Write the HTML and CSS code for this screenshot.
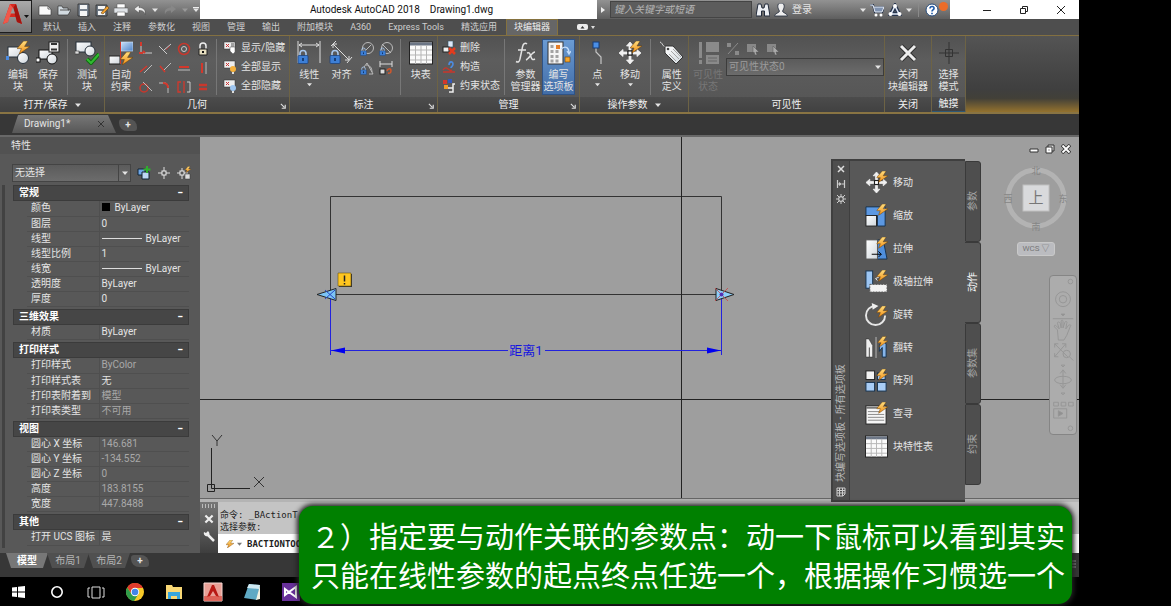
FILE: index.html
```html
<!DOCTYPE html>
<html lang="zh-CN">
<head>
<meta charset="utf-8">
<title>Autodesk AutoCAD 2018 - Drawing1.dwg</title>
<link rel="stylesheet" href="styles.css">
</head>
<body>
<svg class="sprite" aria-hidden="true">
  <defs>
    <linearGradient id="gl" x1="0" y1="0" x2="1" y2="1"><stop offset="0" stop-color="#ffffff"/><stop offset="1" stop-color="#cfd6dc"/></linearGradient>
    <linearGradient id="gb" x1="0" y1="0" x2="1" y2="1"><stop offset="0" stop-color="#c9e0f8"/><stop offset="1" stop-color="#4d83c9"/></linearGradient>
    <linearGradient id="gy" x1="0" y1="0" x2="0" y2="1"><stop offset="0" stop-color="#ffe082"/><stop offset="1" stop-color="#f08a10"/></linearGradient>
  </defs>
  <symbol id="bolt" viewBox="0 0 12 12"><path d="M6 0 0 7l4 0-2 5 10-7-5 0 3-5z" fill="url(#gy)" stroke="#6b3d05" stroke-width=".5"/></symbol>
  <symbol id="lock" viewBox="0 0 12 14"><path d="M3 7V4a3 3 0 0 1 6 0v3" fill="none" stroke="#a9c8ee" stroke-width="1.600"/><rect x="1" y="6" width="10" height="8" rx="1" fill="#3d7fd6" stroke="#173d78" stroke-width=".7"/><path d="M6 8.500v3" stroke="#0b2a59" stroke-width="1.500"/></symbol>
  <symbol id="edit-block" viewBox="0 0 24 24"><rect x="2" y="6" width="14" height="10" fill="url(#gl)" stroke="#26303a"/><circle cx="17" cy="17" r="5.500" fill="url(#gl)" stroke="#26303a"/><rect x="0" y="15" width="3" height="4" fill="#4c8be0"/><use href="#bolt" x="11" y="0" width="13" height="13"/></symbol>
  <symbol id="save-block" viewBox="0 0 24 24"><rect x="3" y="9" width="13" height="9" fill="url(#gl)" stroke="#111"/><circle cx="16" cy="18" r="5" fill="url(#gl)" stroke="#111"/><rect x="0" y="17" width="4" height="4" fill="#fff" stroke="#111"/><rect x="13" y="1" width="10" height="10" fill="#eee" stroke="#222"/><path d="M15 3h6M15 8.500h6" stroke="#333" stroke-width="2"/></symbol>
  <symbol id="test-block" viewBox="0 0 24 24"><rect x="1" y="1" width="15" height="10" fill="url(#gl)" stroke="#26303a"/><circle cx="15" cy="10" r="5" fill="url(#gl)" stroke="#26303a"/><rect x="0" y="10" width="4" height="3" fill="#ddd" stroke="#333" stroke-width=".6"/><path d="m12 18 4 4 8-9" fill="none" stroke="#0d6a0d" stroke-width="4"/><path d="m12 18 4 4 8-9" fill="none" stroke="#32b932" stroke-width="2.200"/></symbol>
  <symbol id="auto-con" viewBox="0 0 24 24"><rect x="12" y="1" width="12" height="9" fill="url(#gb)" stroke="#d7e8fa" stroke-width=".6"/><rect x="0" y="15" width="11" height="8" fill="url(#gl)" stroke="#222"/><path d="M11.500 1v22" stroke="#d03a2c"/><use href="#bolt" x="11" y="11" width="13" height="13"/></symbol>
  <symbol id="linear" viewBox="0 0 24 24"><path d="M1 0v22M23 0v22M2 4h20M5 2 2 4l3 2M19 2l3 2-3 2" fill="none" stroke="#ddd"/><use href="#lock" x="0" y="8" width="12" height="15"/></symbol>
  <symbol id="aligned" viewBox="0 0 24 24"><path d="m2 5 5-5M18 22l5-6M4 3l16 16M4 7V3h4M20 15v4h-4" fill="none" stroke="#ddd"/><use href="#lock" x="0" y="8" width="12" height="15"/></symbol>
  <symbol id="table" viewBox="0 0 24 24"><rect x=".5" y="1" width="23" height="22" fill="#fafafa" stroke="#222"/><path d="M1 3h22" stroke="#6c7686" stroke-width="3"/><path d="M1 9h22M1 14h22M1 19h22M6.500 4v19M12 4v19M17.500 4v19" stroke="#b5b5b5"/></symbol>
  <symbol id="fx" viewBox="0 0 24 24"><path d="M13 3c-2-2-4 0-4.500 3L6 18c-.5 3-2 3.500-4 2.500M4 9h8M13 12c3-1 3 1 4 4s2 3 4 2M21 11c-3 0-6 7-9 8" fill="none" stroke="#e2e2e2" stroke-width="1.500"/></symbol>
  <symbol id="author" viewBox="0 0 24 24"><rect x="1" y="1" width="15" height="22" fill="#f5f5f5" stroke="#333"/><path d="M3.500 5.500h3M3.500 10.500h3M3.500 15.500h3M3.500 20h3M8.500 10.500h3M8.500 15.500h3M8.500 20h3" stroke="#a2a2a2" stroke-width="3"/><path d="M9 4h4v4H9z" fill="#e57e28"/><path d="M14 8c5-4 8-1 8 4m-2-2 2 3 2-3" stroke="#c5defa" fill="none" stroke-width="1.300"/><rect x="18" y="16" width="5" height="5" fill="#f6a62d" stroke="#704000" stroke-width=".6"/></symbol>
  <symbol id="point" viewBox="0 0 24 24"><path d="M11 6v5l5 5v7" stroke="#c5c5c5" fill="none" stroke-width="1.200"/><rect x="8" y="1" width="6" height="6" fill="#4b8fe6" stroke="#173d78"/></symbol>
  <symbol id="move" viewBox="0 0 24 24"><path d="M12 1 8.500 5H11v4h2V5h2.500zM12 23l-3.500-4H11v-4h2v4h2.500zM1 12l4-3.500V11h4v2H5v2.500zM23 12l-4-3.500V11h-4v2h4v2.500z" fill="#f1f1f1" stroke="#f1f1f1" stroke-width=".8"/><rect x="10" y="10" width="4" height="4" fill="#fff" stroke="#111"/><use href="#bolt" x="12" y="0" width="12" height="12"/></symbol>
  <symbol id="tag" viewBox="0 0 24 24"><path d="M0 1c3 1 2 5 7 5" stroke="#ddd" fill="none"/><path d="m5 5 8 0 10 11-7 7L5 12z" fill="url(#gl)" stroke="#333"/><circle cx="8" cy="8" r="1.300" fill="#444"/><path d="m11 10 8 8M9 13l7 7M13 8l8 8" stroke="#a5a5a5"/></symbol>
  <symbol id="vis" viewBox="0 0 24 24"><path d="M3 1h3v16H3zM3 19h3v4H3zM10 1h13v10H10zM10 14h13v9H10z" fill="#8a8a8a"/><path d="M12 17h9M12 20h9" stroke="#666"/></symbol>
  <symbol id="close-x" viewBox="0 0 24 24"><path d="m5 5 14 14M19 5 5 19" stroke="#303030" stroke-width="5"/><path d="m5 5 14 14M19 5 5 19" stroke="#ededed" stroke-width="3"/></symbol>
  <symbol id="target" viewBox="0 0 24 24"><path d="M12 1v22M2 12h20M8.500 8.500h7v7h-7z" fill="none" stroke="#333"/></symbol>
  <symbol id="scale" viewBox="0 0 24 24"><path d="M1 3h20v20h-8V12H1z" fill="#5c98e2" stroke="#16324f"/><rect x="1" y="12" width="11" height="11" fill="url(#gl)" stroke="#222"/><use href="#bolt" x="12" y="0" width="12" height="12"/></symbol>
  <symbol id="stretch" viewBox="0 0 24 24"><path d="M12 3h7l4 20H12z" fill="#4f8edb" stroke="#16324f"/><rect x="1" y="3" width="12" height="20" fill="url(#gl)" stroke="#555"/><path d="M7 18h10m-3-3 3 3-3 3" stroke="#000" fill="none"/><use href="#bolt" x="12" y="0" width="12" height="12"/></symbol>
  <symbol id="polar" viewBox="0 0 24 24"><rect x="1" y="1" width="7" height="18" fill="#9cc5f2" stroke="#16324f"/><path d="M5 15h18v8H5z" fill="#f4f4f4" stroke="#555" stroke-dasharray="2 1"/><path d="m11 9 4-2m-4 2 2 2" stroke="#eee" fill="none"/><use href="#bolt" x="12" y="0" width="12" height="12"/></symbol>
  <symbol id="rotate" viewBox="0 0 24 24"><path d="M11 3a10 10 0 1 0 10 10" stroke="#e6e6e6" stroke-width="2" fill="none"/><path d="m7 0 7 3-6 4z" fill="#eee"/><use href="#bolt" x="12" y="3" width="12" height="12"/></symbol>
  <symbol id="flip" viewBox="0 0 24 24"><path d="M1 3h3l4 7v12H1z" fill="#eee" stroke="#333" stroke-width=".6"/><path d="M4.500 12v10" stroke="#444"/><path d="M11.500 1v22" stroke="#bbb"/><path d="M22 8v14h-4V12l-3 4V9l4-3z" fill="#86b5ea" stroke="#16324f"/><use href="#bolt" x="13" y="0" width="11" height="12"/></symbol>
  <symbol id="array" viewBox="0 0 24 24"><rect x="1" y="2" width="9" height="9" fill="#f3f3f3" stroke="#222"/><g fill="#a9cdf5" stroke="#16324f"><rect x="13" y="4" width="8" height="7"/><rect x="1" y="14" width="9" height="9"/><rect x="13" y="14" width="9" height="9"/></g><use href="#bolt" x="12" y="0" width="12" height="12"/></symbol>
  <symbol id="lookup" viewBox="0 0 24 24"><rect x="1" y="4" width="21" height="19" fill="#f6f6f6" stroke="#222"/><path d="M1 6h21" stroke="#777" stroke-width="2"/><path d="M3 10h13M3 13h17M3 16h17M3 19h17" stroke="#888"/><use href="#bolt" x="12" y="0" width="12" height="12"/></symbol>

  <symbol id="g1" viewBox="0 0 14 14"><path d="M2 2v9h11" stroke="#ccc" fill="none"/><path d="M2 0v4M0 11h4M6 11l-2-2" stroke="#d3382c" stroke-width="2"/></symbol>
  <symbol id="g2" viewBox="0 0 14 14"><path d="m6 8 7-6M1 4l8 8" stroke="#ccc" fill="none"/><path d="m8 8 4-4" stroke="#a33"/></symbol>
  <symbol id="g3" viewBox="0 0 14 14"><circle cx="7" cy="7" r="5.500" stroke="#c9372c" stroke-width="1.500" fill="none"/><circle cx="7" cy="7" r="2.500" stroke="#ccc" fill="none"/></symbol>
  <symbol id="g4" viewBox="0 0 14 14"><path d="M4 7V4a3 3 0 0 1 6 0v3" stroke="#eee" fill="none" stroke-width="1.500"/><path d="M3 7h8v6H3z" fill="#e7dfc0" stroke="#222"/><path d="M7 9v2" stroke="#111" stroke-width="2"/></symbol>
  <symbol id="g5" viewBox="0 0 14 14"><path d="m1 11 7-6" stroke="#d3382c" stroke-width="1.500"/><path d="m5 12 8-8" stroke="#bbb"/></symbol>
  <symbol id="g6" viewBox="0 0 14 14"><path d="m2 5 5 6" stroke="#d3382c" stroke-width="1.500"/><path d="m6 9 7-7" stroke="#bbb"/></symbol>
  <symbol id="g7" viewBox="0 0 14 14"><path d="M2 6h10" stroke="#d3382c" stroke-width="2"/><path d="M1 9h12" stroke="#bbb"/></symbol>
  <symbol id="g8" viewBox="0 0 14 14"><path d="M6 2v10" stroke="#d3382c" stroke-width="2"/><path d="M10 1v12" stroke="#bbb"/></symbol>
  <symbol id="g9" viewBox="0 0 14 14"><circle cx="5" cy="8" r="4" stroke="#c9372c" stroke-width="1.500" fill="none"/><path d="m4 2 9 9" stroke="#bbb"/></symbol>
  <symbol id="g10" viewBox="0 0 14 14"><path d="M1 3h6c2 0 3 2 3 4v6" stroke="#bbb" fill="none"/><path d="M5 3c4 0 5 2 5 5" stroke="#d3382c" stroke-width="2" fill="none"/></symbol>
  <symbol id="g11" viewBox="0 0 14 14"><path d="M4 2H1v10h3M7 1v12" stroke="#d3382c" fill="none" stroke-width="1.300"/><path d="M10 2h3v10h-3" stroke="#ccc" fill="none"/></symbol>
  <symbol id="g12" viewBox="0 0 14 14"><path d="M3 5h8M3 9h8" stroke="#c9372c" stroke-width="2.500"/></symbol>
  <symbol id="show" viewBox="0 0 14 14"><rect x="1" y="1" width="11" height="7" fill="#eee" stroke="#333" stroke-width=".5"/><path d="m3 3 3 3M6 3 3 6" stroke="#c33"/><path d="M8 3h3M8 5h3" stroke="#555"/><path d="M7 6h5v5l-2 2-3-3z" fill="#fff" stroke="#555" stroke-width=".5"/></symbol>
  <symbol id="bulb" viewBox="0 0 14 14"><rect x="1" y="1" width="11" height="7" fill="#eee" stroke="#333" stroke-width=".5"/><path d="m3 3 3 3M6 3 3 6" stroke="#c33"/><circle cx="10" cy="9" r="3" fill="#f6b13c"/><path d="M9 12h2v2H9z" fill="#ddd"/></symbol>
  <symbol id="bulb-off" viewBox="0 0 14 14"><rect x="1" y="1" width="11" height="7" fill="#eee" stroke="#333" stroke-width=".5"/><path d="m3 3 3 3M6 3 3 6" stroke="#c33"/><circle cx="10" cy="9" r="3" fill="#9fc6f0"/><path d="M9 12h2v2H9z" fill="#ddd"/></symbol>
  <symbol id="d1" viewBox="0 0 14 14"><circle cx="8" cy="6" r="5.500" stroke="#bbb" fill="none"/><path d="m6 8 5-5" stroke="#bbb"/><use href="#lock" x="0" y="5" width="7" height="9"/></symbol>
  <symbol id="d2" viewBox="0 0 14 14"><circle cx="8" cy="6" r="5.500" stroke="#bbb" fill="none"/><path d="m3 2 9 9" stroke="#bbb"/><use href="#lock" x="0" y="5" width="7" height="9"/></symbol>
  <symbol id="d3" viewBox="0 0 14 14"><path d="M13 13 7 2 4 6M9 13h4" stroke="#bbb" fill="none"/><path d="M6 4c4 0 6 3 6 7" stroke="#bbb" fill="none"/><use href="#lock" x="0" y="5" width="7" height="9"/></symbol>
  <symbol id="d4" viewBox="0 0 14 14"><path d="M1 0v6M13 0v6M1 3h12" stroke="#ddd" fill="none"/><rect x="1" y="8" width="5" height="5" fill="#ddd" stroke="#222"/><path d="M8 10c1-3 4-3 4 0s-3 2-3 2" stroke="#d3582c" fill="none" stroke-width="1.500"/></symbol>
  <symbol id="del" viewBox="0 0 14 14"><rect x="6" y="0" width="5" height="6" fill="#dce9fa" stroke="#356" stroke-width=".6"/><rect x="1" y="6" width="6" height="5" fill="#eee" stroke="#222"/><path d="m7 7 6 6M13 7l-6 6" stroke="#e33b1d" stroke-width="2.500"/></symbol>
  <symbol id="cons" viewBox="0 0 14 14"><path d="M1 12h12M1 10c4-6 6 3 9 0" stroke="#c9372c" fill="none" stroke-width="1.300"/><path d="M7 5c0-4 4-4 4-1s-2 2-2 4" stroke="#4c8be0" fill="none" stroke-width="1.600"/></symbol>
  <symbol id="cstat" viewBox="0 0 14 14"><rect x="1" y="1" width="4" height="4" fill="#d3382c"/><rect x="6" y="0" width="4" height="4" fill="#3659b7"/><rect x="2" y="6" width="4" height="4" fill="#ed9b28"/><path d="M6 9h5V5h2M7 13h4V9" stroke="#eee" fill="none" stroke-width="1.500"/></symbol>
  <symbol id="v1" viewBox="0 0 14 14"><path d="M1 1h4v4H1zM9 9h4v4H9z" fill="#8a8a8a"/><path d="M12 1 2 12" stroke="#8a8a8a"/></symbol>
  <symbol id="v2" viewBox="0 0 14 14"><path d="M1 2h9v8H1z" fill="#888"/><path d="m7 4 6 6-3 0 1 3-2 0-1-3-1 1z" fill="#aaa" stroke="#555" stroke-width=".5"/></symbol>
  <symbol id="launch" viewBox="0 0 8 8"><path d="M1 1l4 4M6 2v4H2" stroke="#ddd" fill="none" stroke-width="1.300"/></symbol>

  <symbol id="q-new" viewBox="0 0 14 14"><path d="M1 3h9l3 3v6H1z" fill="#fafafa" stroke="#333" stroke-width=".6"/><path d="M10 3v3h3" fill="none" stroke="#666"/></symbol>
  <symbol id="q-open" viewBox="0 0 14 14"><path d="M1 12V3h4l1 2h5v2h3l-3 5z" fill="#d2dae0" stroke="#333" stroke-width=".7"/><path d="m3 7h9" stroke="#555"/></symbol>
  <symbol id="q-save" viewBox="0 0 14 14"><path d="M2 1h11v12H2z" fill="#78828e" stroke="#222" stroke-width=".7"/><path d="M4 2h7v4H4zM4 8h7v5H4z" fill="#f5f5f5"/></symbol>
  <symbol id="q-saveas" viewBox="0 0 14 14"><path d="M1 2h11v11H1z" fill="#6d7782" stroke="#222" stroke-width=".7"/><path d="M3 3h7v3H3zM3 8h7v4H3z" fill="#f5f5f5"/><path d="m6 10 6-7 2 2-6 6z" fill="#f0a030" stroke="#553300" stroke-width=".5"/></symbol>
  <symbol id="q-print" viewBox="0 0 14 14"><path d="M3 1h8v4H3z" fill="#fff" stroke="#555" stroke-width=".5"/><path d="M0 5h14v5H0z" fill="#dfe3e7" stroke="#444" stroke-width=".5"/><path d="M3 9h8v4H3z" fill="#fff" stroke="#555" stroke-width=".5"/></symbol>
  <symbol id="undo" viewBox="0 0 14 14"><path d="M6 2 1 6l5 4V7.500c4 0 5 1 6 4 1-5-2-7-6-7z" fill="#eee" stroke="#333" stroke-width=".4"/></symbol>
  <symbol id="redo" viewBox="0 0 14 14"><path d="m8 2 5 4-5 4V7.500c-4 0-5 1-6 4-1-5 2-7 6-7z" fill="#878787"/></symbol>
  <symbol id="caret" viewBox="0 0 6 6"><path d="M0 1.500h6L3 5z" fill="currentColor"/></symbol>
  <symbol id="bino" viewBox="0 0 14 14"><path d="M2 1h3l1 4h2l1-4h3l2 12H8.500V8h-3v5H0z" fill="#eceff4" stroke="#222b3b"/></symbol>
  <symbol id="user" viewBox="0 0 14 14"><path d="M7 0c5 0 3 6 1.500 8 0 2 4.500 2 5 5H.5c.5-3 5-3 5-5C4 6 2 0 7 0z" fill="#eee" stroke="#222b3b" stroke-width=".8"/></symbol>
  <symbol id="cart" viewBox="0 0 14 14"><path d="M0 2h3l2 7h7l2-5H4" fill="#ccd9ec" stroke="#26344d" stroke-width="2.200"/><path d="M0 2h3l2 7h7l2-5H4" fill="#7f92b0" stroke="#e9eef7"/><circle cx="6" cy="12" r="1.500" fill="#fff"/><circle cx="11" cy="12" r="1.500" fill="#fff"/></symbol>
  <symbol id="a360" viewBox="0 0 14 14"><path d="M7 3 3 11h8z" fill="none" stroke="#26344d" stroke-width="4"/><path d="M7 3 3 11h8z" fill="none" stroke="#dfe8f6" stroke-width="1.600"/><circle cx="7" cy="3" r="2" fill="#fff"/><circle cx="2.500" cy="11" r="2" fill="#fff"/><circle cx="11.500" cy="11" r="2" fill="#fff"/></symbol>
  <symbol id="help" viewBox="0 0 14 14"><circle cx="7" cy="7" r="6" fill="#fff" stroke="#264c7d"/><path d="M5 5.500C5 2.500 9.500 3 9 5.500 8.700 7 7 6.800 7 8.500M7 9.700v1.500" fill="none" stroke="#1c58a7" stroke-width="1.600"/></symbol>
</svg>

<main class="desktop">
<div class="app">
  <header class="titlebar">
    <div class="quick">
      <button class="ib" aria-label="新建"><svg><use href="#q-new"/></svg></button>
      <button class="ib" aria-label="打开"><svg><use href="#q-open"/></svg></button>
      <button class="ib" aria-label="保存"><svg><use href="#q-save"/></svg></button>
      <button class="ib" aria-label="另存为"><svg><use href="#q-saveas"/></svg></button>
      <button class="ib" aria-label="打印"><svg><use href="#q-print"/></svg></button>
      <button class="ib" aria-label="放弃"><svg><use href="#undo"/></svg></button>
      <svg class="caret"><use href="#caret"/></svg>
      <button class="ib" aria-label="重做"><svg><use href="#redo"/></svg></button>
      <svg class="caret dim"><use href="#caret"/></svg>
      <svg class="caret"><path d="M0 0h6" stroke="#eee" stroke-width="2"/><use href="#caret"/></svg>
    </div>
    <h1 class="title"><span>Autodesk AutoCAD 2018</span><span>Drawing1.dwg</span></h1>
    <div class="info">
      <svg class="play" viewBox="0 0 6 8"><path d="M1 1v6l4-3z" fill="#eee"/></svg>
      <input class="search" type="text" aria-label="搜索" placeholder="键入关键字或短语">
      <button class="ib" aria-label="搜索"><svg><use href="#bino"/></svg></button>
      <button class="login"><svg><use href="#user"/></svg>登录</button>
      <svg class="caret"><use href="#caret"/></svg>
      <button class="ib" aria-label="应用商店"><svg><use href="#cart"/></svg></button>
      <button class="ib" aria-label="A360"><svg><use href="#a360"/></svg></button>
      <svg class="caret"><use href="#caret"/></svg>
      <span class="bar"></span>
      <button class="ib" aria-label="帮助"><svg><use href="#help"/></svg></button>
      <span class="dot"></span>
    </div>
    <div class="wincontrols">
      <button aria-label="最小化"><svg viewBox="0 0 10 10"><path d="M1 5.500h8"/></svg></button>
      <button aria-label="还原"><svg viewBox="0 0 10 10"><path d="M1.500 3.500h5v5h-5zM3.500 3V1.500h5v5H7"/></svg></button>
      <button aria-label="关闭"><svg viewBox="0 0 10 10"><path d="m1 1 8 8M9 1 1 9"/></svg></button>
    </div>
  </header>

  <nav class="menu">
    <a href="#">默认</a><a href="#">插入</a><a href="#">注释</a><a href="#">参数化</a><a href="#">视图</a><a href="#">管理</a><a href="#">输出</a><a href="#">附加模块</a><a href="#">A360</a><a href="#">Express Tools</a><a href="#">精选应用</a><a href="#" class="on">块编辑器</a>
    <svg class="pill" viewBox="0 0 18 8"><rect y="1" width="11" height="6" rx="2" fill="#eee"/><path d="M3.500 5.500h4l-2-2.500z" fill="#333"/><path d="M14 3h4l-2 3z" fill="#ddd"/></svg>
  </nav>

  <section class="ribbon">
    <div class="panel p-open">
      <div class="tools">
        <button class="big"><svg><use href="#edit-block"/></svg>编辑<br>块</button>
        <button class="big"><svg><use href="#save-block"/></svg>保存<br>块</button>
        <i class="sep"></i>
        <button class="big"><svg><use href="#test-block"/></svg>测试<br>块</button>
      </div>
      <h2>打开/保存<svg class="caret gap"><use href="#caret"/></svg></h2>
    </div>
    <div class="panel p-geo">
      <div class="tools">
        <button class="big"><svg><use href="#auto-con"/></svg>自动<br>约束</button>
        <div class="grid four">
          <svg><use href="#g1"/></svg><svg><use href="#g2"/></svg><svg><use href="#g3"/></svg><svg><use href="#g4"/></svg>
          <svg><use href="#g5"/></svg><svg><use href="#g6"/></svg><svg><use href="#g7"/></svg><svg><use href="#g8"/></svg>
          <svg><use href="#g9"/></svg><svg><use href="#g10"/></svg><svg><use href="#g11"/></svg><svg><use href="#g12"/></svg>
        </div>
        <i class="sep"></i>
        <div class="list">
          <button><svg><use href="#show"/></svg>显示/隐藏</button>
          <button><svg><use href="#bulb"/></svg>全部显示</button>
          <button><svg><use href="#bulb-off"/></svg>全部隐藏</button>
        </div>
      </div>
      <h2>几何<svg class="launch"><use href="#launch"/></svg></h2>
    </div>
    <div class="panel p-dim">
      <div class="tools">
        <button class="big wide"><svg><use href="#linear"/></svg>线性<svg class="caret"><use href="#caret"/></svg></button>
        <button class="big wide"><svg><use href="#aligned"/></svg>对齐</button>
        <div class="grid two"><svg><use href="#d1"/></svg><svg><use href="#d2"/></svg><svg><use href="#d3"/></svg><svg><use href="#d4"/></svg></div>
        <i class="sep"></i>
        <button class="big wide"><svg><use href="#table"/></svg>块表</button>
      </div>
      <h2>标注<svg class="launch"><use href="#launch"/></svg></h2>
    </div>
    <div class="panel p-man">
      <div class="tools">
        <div class="list">
          <button><svg><use href="#del"/></svg>删除</button>
          <button><svg><use href="#cons"/></svg>构造</button>
          <button><svg><use href="#cstat"/></svg>约束状态</button>
        </div>
        <i class="sep"></i>
        <button class="big wide"><svg><use href="#fx"/></svg>参数<br>管理器</button>
        <button class="big wide lit"><svg><use href="#author"/></svg>编写<br>选项板</button>
      </div>
      <h2>管理<svg class="launch"><use href="#launch"/></svg></h2>
    </div>
    <div class="panel p-act">
      <div class="tools">
        <button class="big wide"><svg><use href="#point"/></svg>点<svg class="caret"><use href="#caret"/></svg></button>
        <button class="big wide"><svg><use href="#move"/></svg>移动<svg class="caret"><use href="#caret"/></svg></button>
        <i class="sep"></i>
        <button class="big wide"><svg><use href="#tag"/></svg>属性<br>定义</button>
      </div>
      <h2>操作参数<svg class="caret gap"><use href="#caret"/></svg></h2>
    </div>
    <div class="panel p-vis">
      <div class="tools">
        <button class="big wide off" disabled><svg><use href="#vis"/></svg>可见性<br>状态</button>
        <div class="visbox">
          <div class="row"><svg><use href="#v1"/></svg><svg><use href="#v2"/></svg><svg><use href="#v2"/></svg></div>
          <div class="combo dimmed"><select aria-label="可见性状态" disabled><option>可见性状态0</option></select><svg class="caret"><use href="#caret"/></svg></div>
        </div>
      </div>
      <h2>可见性</h2>
    </div>
    <div class="panel p-close">
      <div class="tools"><button class="big full"><svg><use href="#close-x"/></svg>关闭<br>块编辑器</button></div>
      <h2>关闭</h2>
    </div>
    <div class="panel p-touch">
      <div class="tools"><button class="big full"><svg><use href="#target"/></svg>选择<br>模式</button></div>
      <h2>触摸</h2>
    </div>
    <div class="rest"></div>
  </section>
  <button class="logo" aria-label="应用程序菜单"><svg viewBox="0 0 31 32"><path d="M3 23 10 3h6l6 20-5-2-1-5H9l-1 5z" fill="#d8291f"/><path d="m10 3-7 20 5-2 5-14z" fill="#f0584a"/><path d="m16 3 6 20-5-2-4-14z" fill="#a3140f"/><path d="M10.500 12.500 13 6l2 6.500z" fill="#9a9a9a"/><path d="M24 14h5l-2.500 3z" fill="#111"/></svg></button>

  <div class="filetabs">
    <a href="#" class="filetab">Drawing1*<svg viewBox="0 0 8 8"><path d="m1 1 6 6M7 1 1 7" stroke="#333"/></svg></a>
    <button class="plus" aria-label="新图形">+</button>
  </div>

  <div class="work">
    <aside class="props">
      <h2 class="props-title">特性</h2>
      <div class="props-pick">
        <div class="combo"><select aria-label="选择对象"><option>无选择</option></select><span class="arrow"><svg class="caret"><use href="#caret"/></svg></span></div>
        <svg viewBox="0 0 14 14"><path d="M1 3h7v6H1z" fill="#6ea7e8" stroke="#123"/><path d="M5 6h7v7H5z" fill="#bcd7f5" stroke="#123"/><path d="M10 0v7M6.500 3.500h7" stroke="#2fae2f" stroke-width="2"/></svg>
        <svg viewBox="0 0 14 14"><path d="M7 1v12M1 7h12" stroke="#ddd"/><rect x="5" y="5" width="4" height="4" fill="#555" stroke="#eee"/></svg>
        <svg viewBox="0 0 14 14"><path d="M5 2v11M0 7h11" stroke="#ddd"/><rect x="3" y="5" width="4" height="4" fill="#555" stroke="#eee"/><path d="M8 8h5v5H8z" fill="#ddd" stroke="#333" stroke-width=".5"/><use href="#bolt" x="8" y="0" width="6" height="7"/></svg>
      </div>
      <div class="sheet">
        <section><button class="head">常规<b>−</b></button>
          <table>
            <tr><th>颜色</th><td><i class="swatch"></i>ByLayer</td></tr>
            <tr><th>图层</th><td>0</td></tr>
            <tr><th>线型</th><td><i class="line"></i>ByLayer</td></tr>
            <tr><th>线型比例</th><td>1</td></tr>
            <tr><th>线宽</th><td><i class="line"></i>ByLayer</td></tr>
            <tr><th>透明度</th><td>ByLayer</td></tr>
            <tr><th>厚度</th><td>0</td></tr>
          </table></section>
        <section><button class="head">三维效果<b>−</b></button>
          <table><tr><th>材质</th><td>ByLayer</td></tr></table></section>
        <section><button class="head">打印样式<b>−</b></button>
          <table>
            <tr><th>打印样式</th><td class="ro">ByColor</td></tr>
            <tr><th>打印样式表</th><td>无</td></tr>
            <tr><th>打印表附着到</th><td class="ro">模型</td></tr>
            <tr><th>打印表类型</th><td class="ro">不可用</td></tr>
          </table></section>
        <section><button class="head">视图<b>−</b></button>
          <table>
            <tr><th>圆心 X 坐标</th><td class="ro">146.681</td></tr>
            <tr><th>圆心 Y 坐标</th><td class="ro">-134.552</td></tr>
            <tr><th>圆心 Z 坐标</th><td class="ro">0</td></tr>
            <tr><th>高度</th><td class="ro">183.8155</td></tr>
            <tr><th>宽度</th><td class="ro">447.8488</td></tr>
          </table></section>
        <section><button class="head">其他<b>−</b></button>
          <table><tr><th>打开 UCS 图标</th><td>是</td></tr></table></section>
      </div>
    </aside>

    <div class="stage">
      <div class="canvas">
        <svg class="drawing">
          <g fill="none" stroke="#333">
            <path d="M130.500 59.500h391v98h-391z"/>
            <path d="M11.500 311v40.500H50M7.500 347.500h7v7h-7z" stroke="#222"/>
            <path d="m12 298 5 6 5-6M17 304v5M54 340l10 10M64 340l-10 10"/>
            <line x1="481.500" y1="0" x2="481.500" y2="100%" stroke="#222"/>
            <line x1="0" y1="262.500" x2="100%" y2="262.500" stroke="#222"/>
          </g>
          <path d="M130.500 157v61M521.500 157v61M131 213.500h177M345 213.500h176" stroke="#2222dd" fill="none"/>
          <path d="m131 213.500 14-3v6zM521 213.500l-14-3v6z" fill="#0000f0"/>
          <text class="dimtext" x="326" y="218" text-anchor="middle">距离1</text>
          <path d="m117 157.500 19-6v12z" fill="#7cc4f5" stroke="#222"/>
          <path d="m125 153 10 9M125 162l10-9" stroke="#2545c5"/>
          <path d="m534 157.500-18-6v12z" fill="#8fd0f8" stroke="#222"/>
          <path d="m515 151 13 13M515 164l13-13" stroke="#cc4444" stroke-width=".8"/><circle cx="521.500" cy="157.500" r="2" fill="#5530b0"/>
          <path d="M139 137h13v13h-13z" fill="#333"/><path d="M138 136h13v13h-13z" fill="#ffc620" stroke="#665010" stroke-width=".6"/><path d="M144.500 138.500v6M144.500 146v1.500" stroke="#222" stroke-width="1.500"/>
        </svg>
        <div class="docctl">
          <svg viewBox="0 0 10 10"><path d="M1 5h8v3H1z" fill="#fff" stroke="#333"/></svg>
          <svg viewBox="0 0 10 10"><path d="M3 1h6v6H3z" fill="#ddd" stroke="#333"/><path d="M1 3h6v6H1z" fill="#fff" stroke="#333"/><path d="M3.500 5.500h1v1h-1z" fill="#333"/></svg>
          <svg viewBox="0 0 10 10"><path d="m1 1 8 8M9 1 1 9" stroke="#333" stroke-width="3.500"/><path d="m1.500 1.500 7 7M8.500 1.500l-7 7" stroke="#fff" stroke-width="1.800"/></svg>
        </div>
        <div class="cube">
          <svg viewBox="0 0 66 70"><circle cx="33" cy="35" r="28" fill="none" stroke="#b3b3b3" stroke-width="5"/><rect x="20" y="22" width="26" height="26" fill="#d9dadc" stroke="#c0c0c0"/><g class="cubetext" text-anchor="middle"><text x="33" y="11">北</text><text x="33" y="67">南</text><text x="5" y="39">西</text><text x="60" y="39">东</text><text class="top" x="33" y="40">上</text></g></svg>
          <button class="wcs">WCS ▽</button>
        </div>
        <div class="navbar">
          <svg viewBox="0 0 28 170" fill="none" stroke="#959595"><circle cx="22" cy="6" r="2.500"/><circle cx="14" cy="25" r="8"/><circle cx="14" cy="25" r="4"/><path d="M12 41h4l-2 2z" fill="#909090"/><path d="M3 46h22M8 58l-3-3c-1-1 0-3 2-1l3 3-2-6c0-2 2-2 3 0l1 5v-7c0-2 2-2 2 0v7l2-6c1-2 3-1 2 1l-1 6 3-4c2-1 3 0 2 1l-4 10-3 5h-6z"/><path d="m5 73 14 14M17 73 5 87M5 77v-4h4M13 73h4v4M5 83v4h4"/><circle cx="18" cy="84" r="4"/><path d="m21 87 4 4M12 96h4l-2 2z"/><ellipse cx="14" cy="112" rx="9" ry="4"/><path d="M14 102v18m-3-15 3-4 3 4m-6 12 3 4 3-4M12 126h4l-2 2zM4 136h5v4H4zM12 136h5v4h-5zM20 136h5v4h-5zM4 143h14v10H4z"/><path d="m9 145 5 3-5 3z" fill="#909090"/><circle cx="22" cy="164" r="2.500"/></svg>
        </div>
      </div>
      <div class="command">
        <div class="cmdside">
          <i class="grip"></i>
          <svg viewBox="0 0 10 10"><path d="m2 2 6 6M8 2 2 8" stroke="#eee" stroke-width="1.800"/></svg>
          <svg viewBox="0 0 12 12"><path d="m5 5 6 6" stroke="#eee" stroke-width="2.500"/><path d="M5 1 3 3 1 2c-1 3 2 5 4 4s2-3 0-5z" fill="#eee"/></svg>
        </div>
        <div class="cmdmain">
          <div class="log">命令: _BActionT<br>选择参数:</div>
          <div class="prompt"><svg><use href="#bolt"/></svg><svg class="caret"><use href="#caret"/></svg><input type="text" aria-label="命令行" value="BACTIONTOO"></div>
        </div>
      </div>
      <div class="palette">
        <div class="spine">
          <svg viewBox="0 0 10 10"><path d="m2 2 6 6M8 2 2 8" stroke="#ddd" stroke-width="1.500"/></svg>
          <svg viewBox="0 0 10 10"><path d="M1.500 1v8M8.500 1v8M2 5h2M8 5H6" stroke="#ccc" stroke-width="1.200"/><path d="m3 3 3 2-3 2z" fill="#ccc"/></svg>
          <svg viewBox="0 0 10 10"><circle cx="5" cy="5" r="2.300" fill="none" stroke="#ccc" stroke-width="1.200"/><path d="M5 0v2M5 8v2M0 5h2M8 5h2M1 1l2 2M9 1 7 3M1 9l2-2M9 9 7 7" stroke="#ccc"/></svg>
          <span>块编写选项板 - 所有选项板</span>
          <svg viewBox="0 0 10 10"><path d="M1 1h8v6l-2 2H1zM1 3.500h8M1 6h8M3.500 1v8M6.500 1v8" fill="none" stroke="#ccc"/></svg>
        </div>
        <div class="actions">
          <button><svg><use href="#move"/></svg>移动</button>
          <button><svg><use href="#scale"/></svg>缩放</button>
          <button><svg><use href="#stretch"/></svg>拉伸</button>
          <button><svg><use href="#polar"/></svg>极轴拉伸</button>
          <button><svg><use href="#rotate"/></svg>旋转</button>
          <button><svg><use href="#flip"/></svg>翻转</button>
          <button><svg><use href="#array"/></svg>阵列</button>
          <button><svg><use href="#lookup"/></svg>查寻</button>
          <button><svg><use href="#table"/></svg>块特性表</button>
        </div>
        <div class="sidetabs"><button>参数</button><button class="on">动作</button><button>参数集</button><button>约束</button></div>
      </div>
    </div>
  </div>

  <footer class="layouts">
    <a href="#" class="on">模型</a><a href="#">布局1</a><a href="#">布局2</a><button class="plus" aria-label="新建布局">+</button>
    <svg class="burger" viewBox="0 0 8 10"><path d="M1 2h6M1 5h6M1 8h6" stroke="#aaa"/></svg>
  </footer>
</div>

<nav class="taskbar">
  <button aria-label="开始"><svg viewBox="0 0 20 20"><path d="M4 5.500 9 5v4.500H4zM10 4.800l7-.8v5.500h-7zM4 10.500h5V15l-5-.5zM10 10.500h7V16l-7-.8z" fill="#fff"/></svg></button>
  <button aria-label="搜索"><svg viewBox="0 0 20 20"><circle cx="10" cy="10" r="5.200" fill="none" stroke="#fff" stroke-width="1.600"/></svg></button>
  <button aria-label="任务视图"><svg viewBox="0 0 20 20"><path d="M6 5h8v11H6zM4 6H2v9h2M16 6h2v9h-2" fill="none" stroke="#ddd"/></svg></button>
  <button aria-label="Chrome"><svg viewBox="0 0 20 20"><circle cx="10" cy="10" r="9" fill="#f7c928"/><path d="M2.200 5.500A9 9 0 0 1 18 6h-8a4 4 0 0 0-4 5z" fill="#df3b2c"/><path d="M2.200 5.500A9 9 0 0 0 9 19l4.500-7A4 4 0 0 1 6.500 12z" fill="#2f9c4a"/><circle cx="10" cy="10" r="4.200" fill="#fff"/><circle cx="10" cy="10" r="3.300" fill="#4285e8"/></svg></button>
  <button aria-label="文件资源管理器"><svg viewBox="0 0 20 20"><path d="M2 3h6l1 2h9v12H2z" fill="#f8d775"/><path d="M4 10h12v7h-3v-3H7v3H4z" fill="#36a6df"/></svg></button>
  <button aria-label="AutoCAD"><svg viewBox="0 0 20 20"><rect x="1" y="1" width="18" height="18" fill="#e9a096"/><path d="M1 1h18v18H1z" fill="none" stroke="#f7d8d3"/><path d="M4 15 9 3h2l5 12-3-1-3-5-3 5z" fill="#b81914"/><path d="M1 14h18v5H1z" fill="#d6392d" opacity=".6"/></svg></button>
  <button aria-label="记事本"><svg viewBox="0 0 20 20"><path d="m7 2 11 1-3 15-13-2z" fill="#5fa9c4"/><path d="m7 2 11 1-1 4L5 6z" fill="#cfe9f2"/><path d="m14 18 4-15v14z" fill="#f0f0e0"/></svg></button>
  <button aria-label="Visual Studio"><svg viewBox="0 0 20 20"><rect x="1" y="1" width="18" height="18" fill="#68309a"/><path d="m4 7 4 3-4 3zM15 5v10L8 10zM15 5l-7 5" fill="none" stroke="#fff" stroke-width="2"/></svg></button>
</nav>
<p class="caption">２）指定要与动作关联的参数点：动一下鼠标可以看到其实<br>只能在线性参数的起点终点任选一个，根据操作习惯选一个</p>
</main>
</body>
</html>
```
FILE: styles.css
```css
* { box-sizing: border-box; }
body { margin: 0; background: #000; color: #e4e4e4; font: 10px/12px Roboto, "Noto Sans CJK SC", sans-serif; }
button, input, select { font: inherit; color: inherit; background: none; border: 0; padding: 0; margin: 0; }
a { color: inherit; text-decoration: none; }
h1, h2, p { margin: 0; font-size: 10px; font-weight: 400; }
svg { display: block; flex: none; }
.sprite { position: absolute; width: 0; height: 0; }

.desktop { position: relative; display: flex; flex-direction: column; min-height: 100vh; padding-right: 92px; }
.app { position: relative; flex: 1; display: flex; flex-direction: column; background: #585858; }
.caret { width: 6px; height: 6px; color: #e4e4e4; }
.caret.dim { color: #999; }

.titlebar { display: flex; height: 19px; background: #fff; }
.quick, .info { display: flex; align-items: center; background: linear-gradient(#929292, #5e5e5e); }
.quick { width: 200px; padding-left: 38px; gap: 5px; }
.ib svg, .login svg { width: 14px; height: 14px; }
.title { flex: 1; display: flex; justify-content: center; align-items: center; gap: 10px; padding-left: 6px; color: #111; }
.info { width: 353px; gap: 4px; padding-left: 3px; }
.play { width: 6px; height: 8px; }
.search { width: 142px; height: 17px; background: #5c5c5c; border: 1px solid #444; padding: 0 3px; font-style: italic; }
.search::placeholder { color: #b5b5b5; opacity: 1; }
.login { display: flex; align-items: center; gap: 4px; flex: 1; }
.bar { width: 1px; height: 15px; background: #8a8a8a; margin: 0 2px; }
.dot { width: 9px; height: 9px; border-radius: 50%; background: #ec6c28; align-self: flex-start; margin: 2px 2px 0 -4px; }
.wincontrols { display: flex; width: 129px; padding-left: 19px; }
.wincontrols button { flex: 1; display: grid; place-items: center; }
.wincontrols svg { width: 10px; height: 10px; fill: none; stroke: #222; }

.menu { display: flex; align-items: stretch; height: 16px; padding-left: 35px; gap: 1px; background: #4e4e4e; font-size: 9px; line-height: 17px; color: #cfcfcf; }
.menu a { padding: 0 8px; white-space: nowrap; }
.menu a.on { background: #666; border: 1px solid #85723f; border-bottom: 0; padding: 0 7px; line-height: 15px; color: #eee; }
.pill { width: 18px; height: 8px; margin: 4px 0 0 18px; }

.ribbon { display: flex; border-top: 1px solid #837041; border-bottom: 2px solid #897443; background: #5a5a5a; }
.panel { display: flex; flex-direction: column; border-right: 1px solid #6d6345; }
.tools { display: flex; height: 61px; padding: 3px 0 2px; background: linear-gradient(#525252, #5d5d5d 40%, #575757); }
.panel h2 { display: flex; align-items: center; justify-content: center; position: relative; height: 15px; background: linear-gradient(#4c4c4c, #414141); color: #f0f0f0; }
.gap { margin-left: 7px; }
.launch { position: absolute; right: 2px; bottom: 2px; width: 7px; height: 7px; }
.big { width: 30px; align-self: flex-start; padding-top: 2px; display: block; text-align: center; line-height: 12px; white-space: nowrap; }
.big > svg:first-child { width: 24px; height: 24px; margin: 0 auto 4px; }
.big .caret { margin: 1px auto 0; width: 5px; height: 5px; }
.big.wide { width: 33px; }
.big.full { width: 100%; }
.big.lit { height: 56px; background: linear-gradient(#6a9bd3, #426da7); border: 1px solid #2f5386; padding-top: 0; }
.big.off { color: #777; width: 36px; }
.sep { width: 1px; height: 56px; background: #777; margin: 0 4px; flex: none; }
.grid { display: grid; grid-auto-rows: 19px; place-items: center; }
.grid svg { width: 14px; height: 14px; }
.four { grid-template-columns: repeat(4, 19px); }
.two { grid-template-columns: repeat(2, 19px); }
.list { display: flex; flex-direction: column; }
.list button { display: flex; align-items: center; gap: 4px; height: 19px; white-space: nowrap; }
.list svg { width: 14px; height: 14px; }
.p-open { width: 105px; } .p-open .tools { padding-left: 3px; }
.p-geo { width: 185px; } .p-geo .tools { padding-left: 1px; } .p-geo .list { margin-left: 2px; }
.p-dim { width: 148px; } .p-dim .tools { padding-left: 3px; }
.p-man { width: 142px; } .p-man .tools { padding-left: 4px; }
.p-act { width: 109px; } .p-act .tools { padding-left: 1px; }
.p-vis { width: 196px; } .p-vis .tools { padding-left: 1px; }
.p-close { width: 47px; }
.p-touch { width: 34px; }
.p-touch h2 { border-bottom: 1px solid #2d5877; }
.rest { flex: 1; background: linear-gradient(#545454, #3f3f3f 70%, #424038 82%, #94722e); }
.visbox { flex: 1; display: flex; flex-direction: column; }
.visbox .row { display: flex; gap: 6px; height: 19px; align-items: center; }
.row svg { width: 14px; height: 14px; }
.combo { display: flex; align-items: center; height: 18px; border: 1px solid #3c3c3c; background: linear-gradient(#5b5b5b, #6c6c6c); }
.combo select { appearance: none; flex: 1; padding-left: 2px; opacity: 1; }
.combo.dimmed { color: #9c9c9c; padding-right: 2px; }

.logo { position: absolute; left: 0; top: 0; width: 32px; height: 33px; border: 1px solid #1d1d1d; border-left: 0; background: linear-gradient(#aaa, #777); }
.logo svg { width: 31px; height: 32px; }

.filetabs { display: flex; align-items: flex-end; height: 23px; padding: 0 12px 2px; gap: 3px; background: #373737; border-bottom: 2px solid #686868; }
.filetab { display: flex; align-items: center; justify-content: space-between; width: 104px; height: 18px; padding: 0 11px 0 12px; background: linear-gradient(#777, #575757); clip-path: polygon(6px 0, 96px 0, 100% 100%, 0 100%); }
.filetab svg { width: 8px; height: 8px; }
.plus { width: 18px; height: 12px; border-radius: 3px 8px 3px 8px; background: #545454; font-weight: 700; line-height: 12px; text-align: center; }
.filetabs .plus { margin-bottom: 2px; }

.work { flex: 1; display: flex; }
.props { width: 200px; background: #585858; display: flex; flex-direction: column; }
.props-title { height: 17px; line-height: 17px; padding-left: 11px; background: #525252; }
.props-pick { display: flex; align-items: center; gap: 6px; padding: 7px 9px 0 12px; height: 31px; }
.props-pick .combo { flex: 1; border-color: #444; }
.props-pick > svg { width: 14px; height: 14px; }
.arrow { display: grid; place-items: center; width: 12px; height: 16px; border-left: 1px solid #444; }
.sheet { padding-left: 8px; padding-right: 11px; margin: 0 0 0 2px; border-left: 3px solid #424242; }
.sheet section { margin-bottom: 2px; }
.head { display: flex; justify-content: space-between; align-items: center; width: 100%; height: 16px; padding: 0 5px; background: #464646; border: 1px solid #3b3b3b; font-weight: 700; color: #fff; }
.sheet table { width: calc(100% - 14px); margin-left: 14px; border-collapse: collapse; table-layout: fixed; }
.sheet tr { height: 15px; }
.sheet th, .sheet td { height: 15px; padding: 0 0 0 4px; line-height: 14px; border-bottom: 1px solid #4f4f4f; white-space: nowrap; font-weight: 400; text-align: left; }
.sheet th { width: 72px; }
.sheet td { padding-left: 2px; border-left: 1px solid #4f4f4f; }
.sheet td.ro { color: #a8a8a8; }
.swatch { display: inline-block; width: 8px; height: 8px; margin-right: 5px; background: #000; }
.line { display: inline-block; width: 40px; height: 1px; margin-right: 4px; background: #ddd; vertical-align: 3px; }

.stage { position: relative; flex: 1; display: flex; flex-direction: column; }
.canvas { position: relative; flex: 1; background: #9e9e9e; }
.drawing { position: absolute; inset: 0; width: 100%; height: 100%; }
.dimtext { font-size: 13px; fill: #1414e0; }
.docctl { position: absolute; right: 8px; top: 7px; display: flex; gap: 6px; }
.docctl svg { width: 10px; height: 10px; }
.cube { position: absolute; right: 10px; top: 26px; display: flex; flex-direction: column; align-items: center; gap: 9px; }
.cube > svg { width: 66px; height: 70px; }
.cubetext { font-size: 9px; fill: #858585; }
.cubetext .top { font-size: 15px; fill: #777; }
.wcs { width: 38px; height: 14px; border-radius: 3px; background: #bbbcc0; border: 1px solid #c9c9c9; color: #777; font-size: 8px; line-height: 12px; white-space: nowrap; }
.navbar { position: absolute; right: 2px; top: 138px; width: 28px; border: 1px solid #858585; border-radius: 4px; background: #acacac; }
.navbar svg { width: 100%; height: auto; }

.command { display: flex; height: 55px; padding-top: 3px; border-top: 1px solid #666; background: #b4b4b4; font-family: "DejaVu Sans Mono", "Noto Sans CJK SC", monospace; font-size: 9px; color: #222; }
.cmdside { width: 18px; display: flex; flex-direction: column; align-items: center; gap: 5px; padding-top: 2px; background: linear-gradient(#777, #3e3e3e); }
.cmdside svg { width: 12px; height: 12px; }
.grip { width: 14px; height: 4px; background: repeating-linear-gradient(90deg, #bbb 0 1px, transparent 1px 3px); }
.cmdmain { flex: 1; display: flex; flex-direction: column; }
.log { flex: 1; padding: 7px 2px 0; background: #c4c4c4; }
.prompt { display: flex; align-items: center; gap: 3px; height: 19px; padding-left: 8px; background: #fff; }
.prompt svg { width: 8px; height: 8px; }
.prompt .caret { color: #777; width: 5px; }
.prompt input { flex: 1; padding-left: 2px; font-weight: 700; }

.palette { position: absolute; right: 98px; top: 22px; display: flex; align-items: stretch; height: 343px; }
.spine { display: flex; flex-direction: column; align-items: center; gap: 5px; width: 19px; padding: 3px 0; background: #4e4e4e; border: 2px solid #3f3f3f; border-right-width: 1px; color: #b9b9b9; }
.spine svg { width: 10px; height: 10px; }
.spine span { flex: 1; writing-mode: vertical-rl; text-orientation: sideways; transform: rotate(180deg); white-space: nowrap; }
.actions { width: 115px; padding-top: 5px; background: #585858; border: solid #3f3f3f; border-width: 2px 0; }
.actions button { display: flex; align-items: center; gap: 5px; width: 100%; height: 33px; padding-left: 15px; }
.actions svg { width: 23px; height: 23px; }
.sidetabs { display: flex; flex-direction: column; width: 16px; padding: 2px 0 17px; }
.sidetabs button { flex: 1; writing-mode: vertical-rl; text-orientation: sideways; transform: rotate(180deg); background: #4e4e4e; border: 1px solid #3a3a3a; border-radius: 3px 0 0 3px; color: #a5a5a5; text-align: center; }
.sidetabs .on { background: #585858; border-right: 0; color: #fff; }

.layouts { display: flex; height: 24px; padding-left: 6px; background: #373737; }
.layouts a { width: 42px; height: 15px; line-height: 15px; text-align: center; margin-right: -1px; background: #505050; color: #b5b5b5; clip-path: polygon(0 0, 100% 0, 88% 100%, 12% 100%); }
.layouts a.on { background: #777; color: #fff; font-weight: 700; }
.layouts .plus { margin: 2px 0 0 2px; }
.burger { width: 8px; height: 10px; margin: 6px 2px 0 auto; }

.taskbar { display: flex; gap: 19px; height: 29px; padding-left: 8px; background: #000; }
.taskbar button { width: 20px; display: grid; place-items: center; }
.taskbar svg { width: 20px; height: 20px; }
.caption { position: absolute; left: 299px; right: 99px; bottom: 2px; padding: 13px 12px 7px; border-radius: 14px; background: #008000; box-shadow: 0 0 5px 2px #222; color: #fff; font-size: 29px; line-height: 39px; white-space: nowrap; }
```
